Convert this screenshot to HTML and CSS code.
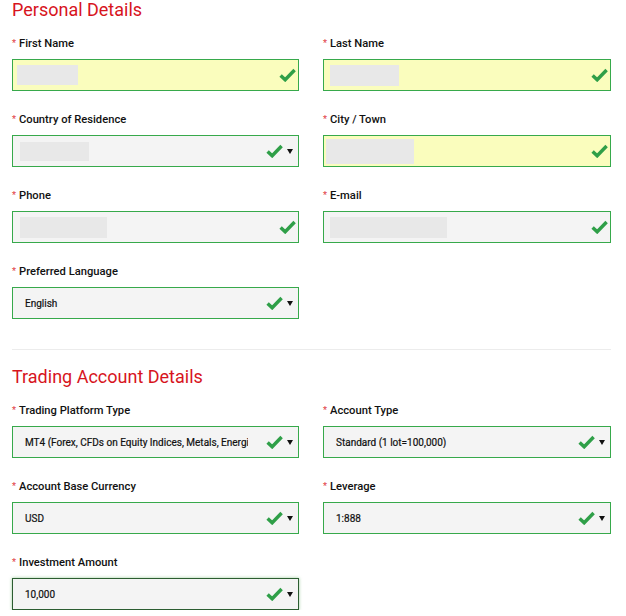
FILE: index.html
```html
<!DOCTYPE html>
<html lang="en">
<head>
  <meta charset="UTF-8">
  <meta name="viewport" content="width=device-width, initial-scale=1.0">
  <title>Open Account - Personal Details</title>
  <link rel="stylesheet" href="styles.css">
</head>
<body>

<div class="form-wrap">
  <h2 class="section-title">Personal Details</h2>
  <div class="form-grid">
    <div class="form-group">
      <label><span class="req">*</span>First Name</label>
      <div class="field field-auto field-masked">
        <span class="mask mask-first"></span>
        <span class="check"></span>
      </div>
    </div>
    <div class="form-group">
      <label><span class="req">*</span>Last Name</label>
      <div class="field field-auto field-masked">
        <span class="mask mask-last"></span>
        <span class="check"></span>
      </div>
    </div>
    <div class="form-group">
      <label><span class="req">*</span>Country of Residence</label>
      <div class="field field-select field-masked">
        <span class="mask mask-country"></span>
        <span class="check"></span>
        <span class="caret"></span>
      </div>
    </div>
    <div class="form-group">
      <label><span class="req">*</span>City / Town</label>
      <div class="field field-auto field-masked">
        <span class="mask mask-city"></span>
        <span class="check"></span>
      </div>
    </div>
    <div class="form-group">
      <label><span class="req">*</span>Phone</label>
      <div class="field field-masked">
        <span class="mask mask-phone"></span>
        <span class="check"></span>
      </div>
    </div>
    <div class="form-group">
      <label><span class="req">*</span>E-mail</label>
      <div class="field field-masked">
        <span class="mask mask-email"></span>
        <span class="check"></span>
      </div>
    </div>
    <div class="form-group">
      <label><span class="req">*</span>Preferred Language</label>
      <div class="field field-select">
        <span class="value">English</span>
        <span class="check"></span>
        <span class="caret"></span>
      </div>
    </div>
  </div>

  <hr class="divider">

  <h2 class="section-title">Trading Account Details</h2>
  <div class="form-grid">
    <div class="form-group">
      <label><span class="req">*</span>Trading Platform Type</label>
      <div class="field field-select">
        <span class="value">MT4 (Forex, CFDs on Equity Indices, Metals, Energies, Shares)</span>
        <span class="check"></span>
        <span class="caret"></span>
      </div>
    </div>
    <div class="form-group">
      <label><span class="req">*</span>Account Type</label>
      <div class="field field-select">
        <span class="value">Standard (1 lot=100,000)</span>
        <span class="check"></span>
        <span class="caret"></span>
      </div>
    </div>
    <div class="form-group">
      <label><span class="req">*</span>Account Base Currency</label>
      <div class="field field-select">
        <span class="value">USD</span>
        <span class="check"></span>
        <span class="caret"></span>
      </div>
    </div>
    <div class="form-group">
      <label><span class="req">*</span>Leverage</label>
      <div class="field field-select">
        <span class="value">1:888</span>
        <span class="check"></span>
        <span class="caret"></span>
      </div>
    </div>
    <div class="form-group">
      <label><span class="req">*</span>Investment Amount</label>
      <div class="field field-select field-focus">
        <span class="value">10,000</span>
        <span class="check"></span>
        <span class="caret"></span>
      </div>
    </div>
  </div>
</div>

</body>
</html>
```

FILE: styles.css
```css
body {
  margin: 0;
  font-family: Roboto, "Liberation Sans", Arial, sans-serif;
  color: #111;
  background: #fff;
}
.form-wrap {
  width: 599px;
  padding: 0 12px;
}
.section-title {
  margin: 0 0 15px;
  font-size: 18px;
  line-height: 20px;
  font-weight: 400;
  color: #d7141d;
}
.form-grid {
  display: grid;
  grid-template-columns: 287px 288px;
  column-gap: 24px;
  row-gap: 20px;
}
.form-group label {
  display: flex;
  align-items: center;
  height: 16px;
  font-size: 11.2px;
  font-weight: 500;
  margin-bottom: 8px;
  color: #111;
  white-space: nowrap;
}
.req {
  color: #e2454b;
  font-size: 9px;
  line-height: 1;
  margin-right: 3px;
}
.field {
  box-sizing: border-box;
  height: 32px;
  display: flex;
  align-items: center;
  border: 1px solid #37a94b;
  background: #f4f4f4;
  padding: 0 2px 0 12px;
  overflow: hidden;
}
.field-auto {
  background: #fafdbd;
}
.field-select {
  padding-right: 5px;
}
.field-focus {
  border-color: #2c5d31;
  box-shadow: 0 0 3px rgba(90, 170, 90, 0.6);
}
.field-masked {
  padding-left: 0;
}
.value {
  flex: 1;
  min-width: 0;
  margin-right: 10px;
  font-size: 10px;
  color: #111;
  white-space: nowrap;
  overflow: hidden;
  -webkit-text-stroke: 0.2px #111;
}
.mask {
  display: block;
  background: #e8e8e8;
  flex: none;
  margin-right: auto;
}
.mask-first { width: 61px; height: 20px; margin-left: 4px; }
.mask-last { width: 69px; height: 21px; margin-left: 6px; }
.mask-country { width: 69px; height: 19px; margin-left: 7px; }
.mask-city { width: 88px; height: 25px; margin-left: 2px; }
.mask-phone { width: 87px; height: 21px; margin-left: 7px; }
.mask-email { width: 117px; height: 21px; margin-left: 6px; }
.check {
  flex: none;
  width: 17px;
  height: 14px;
  margin-left: 8px;
  background: url("data:image/svg+xml;utf8,<svg xmlns='http://www.w3.org/2000/svg' viewBox='0 0 17 14'><path d='M1.6 7.4 L6.2 11.8 L15.6 2' fill='none' stroke='%232f9f48' stroke-width='3.4'/></svg>") no-repeat center;
}
.caret {
  flex: none;
  width: 0;
  height: 0;
  margin-left: 4px;
  border-left: 3px solid transparent;
  border-right: 3px solid transparent;
  border-top: 5px solid #111;
}
.divider {
  border: 0;
  border-top: 1px solid #ececec;
  margin: 30px 0 17px;
}
```
